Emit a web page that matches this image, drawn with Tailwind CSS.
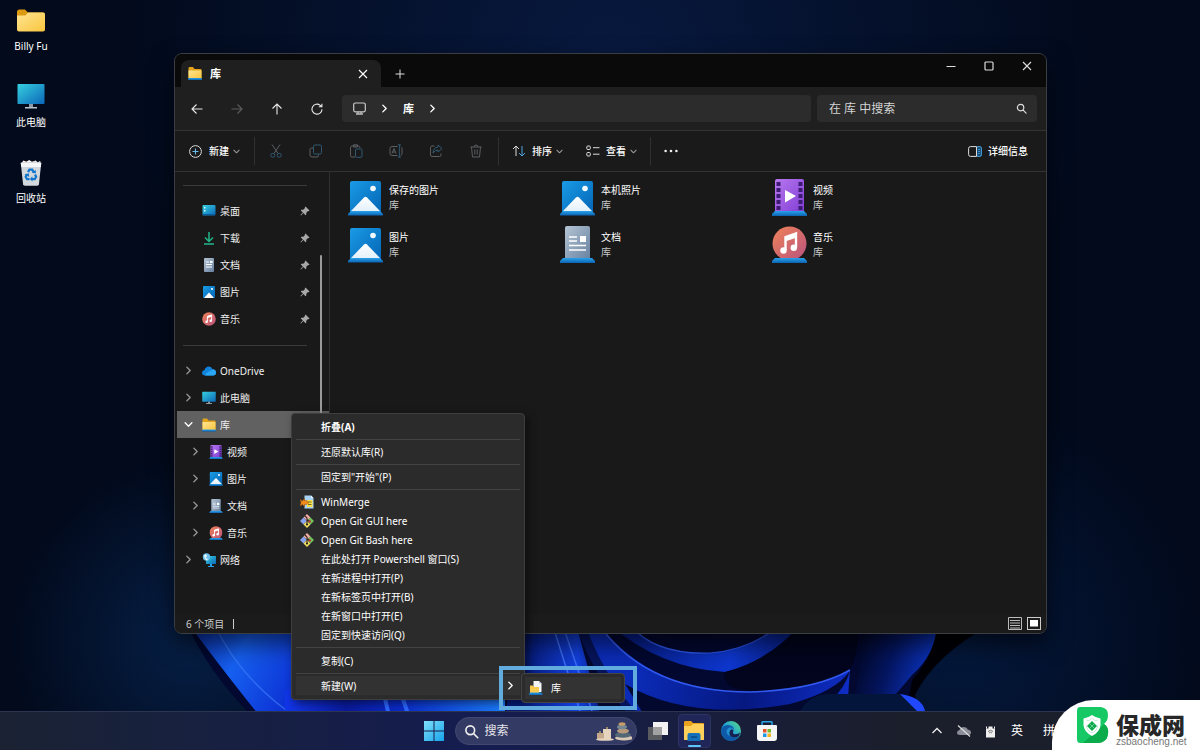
<!DOCTYPE html>
<html lang="zh-CN">
<head>
<meta charset="utf-8">
<title>库 - 文件资源管理器</title>
<script src="https://cdn.jsdelivr.net/npm/@tailwindcss/browser@4"></script>
</head>
<body class="bg-[#020a1c] font-['Noto_Sans','Noto_Sans_CJK_SC',sans-serif] text-[10px] leading-4 text-white">

<!-- Shared icons -->
<svg class="absolute size-0" aria-hidden="true">
  <defs>
    <linearGradient id="gFolder" x1="0" y1="0" x2="1" y2="1"><stop offset="0" stop-color="#ffe594"/><stop offset="1" stop-color="#f9c53c"/></linearGradient>
    <linearGradient id="gScreen" x1="0" y1="0" x2="1" y2="1"><stop offset="0" stop-color="#36d0e0"/><stop offset="1" stop-color="#0b66b8"/></linearGradient>
    <linearGradient id="gPic" x1="0" y1="0" x2="1" y2="1"><stop offset="0" stop-color="#1a9be6"/><stop offset="1" stop-color="#0364b4"/></linearGradient>
    <linearGradient id="gDoc" x1="0" y1="0" x2="1" y2="1"><stop offset="0" stop-color="#b4c4d3"/><stop offset="1" stop-color="#6680a0"/></linearGradient>
    <linearGradient id="gMusic" x1="0" y1="0" x2="1" y2="1"><stop offset="0" stop-color="#f08358"/><stop offset="1" stop-color="#b8527f"/></linearGradient>
    <linearGradient id="gVideo" x1="0" y1="0" x2="1" y2="1"><stop offset="0" stop-color="#b877ee"/><stop offset="1" stop-color="#7f3dd4"/></linearGradient>
    <linearGradient id="gStand" x1="0" y1="0" x2="0" y2="1"><stop offset="0" stop-color="#2aa2ec"/><stop offset="1" stop-color="#0b62b0"/></linearGradient>
    <linearGradient id="gPeak" x1="0" y1="0" x2="0" y2="1"><stop offset="0" stop-color="#fff"/><stop offset="1" stop-color="#e2f1fa"/></linearGradient>
    <linearGradient id="gEdge" x1="0" y1="1" x2="1" y2="0"><stop offset="0" stop-color="#0c59a4"/><stop offset=".5" stop-color="#1fa5d8"/><stop offset="1" stop-color="#5fdc77"/></linearGradient>
    <linearGradient id="gWin" x1="0" y1="0" x2="1" y2="1"><stop offset="0" stop-color="#7fe0fb"/><stop offset="1" stop-color="#16a3ea"/></linearGradient>

    <symbol id="folder" viewBox="0 0 28 22"><path d="M0 2.500Q0 0 2.500 0H8L11 3H26Q28 3 28 5V9H0Z" fill="#dc9a12"/><path d="M0 6H8.500L11 3H26Q28 3 28 5V20Q28 22 26 22H2Q0 22 0 20Z" fill="url(#gFolder)"/></symbol>
    <symbol id="libfolder" viewBox="0 0 28 26"><path d="M1 2.500Q1 0 3 0H10L13 4H25Q27 4 27 6V22H1Z" fill="#e3a41c"/><path d="M1 7H27V23H1Z" fill="url(#gFolder)"/><path d="M2 22H26L28 24V26H0V24Z" fill="url(#gStand)"/></symbol>
    <symbol id="pc" viewBox="0 0 28 25"><rect x=".5" width="27" height="20" rx=".8" fill="url(#gScreen)"/><path d="M12 20h4v3h-4z" fill="#8d9aa5"/><path d="M8 23h12v1.500H8z" fill="#b8c2ca"/></symbol>
    <symbol id="pic" viewBox="0 0 35 35"><rect x="2" y="0" width="31" height="33" rx="2" fill="url(#gPic)"/><path d="M3 30 16 16.500Q17.500 15 19 16.500L32 30Z" fill="url(#gPeak)"/><circle cx="25" cy="7.500" r="2.800" fill="#f2faff"/><path d="M3 30H32L35 33V34.500H0V33Z" fill="url(#gStand)"/></symbol>
    <symbol id="picflat" viewBox="0 0 14 14"><rect x="1" y="1" width="12" height="12" rx="1" fill="url(#gPic)"/><path d="M2 13 7 7.500 12 13Z" fill="#fff"/><circle cx="10" cy="4" r="1.100" fill="#fff"/></symbol>
    <symbol id="doc" viewBox="0 0 35 37"><rect x="5" width="25" height="35" rx="2" fill="url(#gDoc)"/><path d="M9 11h8M9 15h8M9 19.500h17M9 24h17" stroke="#fff" stroke-width="1.700"/><rect x="20" y="10" width="6" height="6" fill="#fff"/><path d="M3 32H32L35 35V37H0V35Z" fill="url(#gStand)"/></symbol>
    <symbol id="docflat" viewBox="0 0 14 14"><rect x="2" width="10" height="14" rx="1" fill="url(#gDoc)"/><path d="M4 4h3M4 6.500h6M4 9h6" stroke="#fff"/><path d="M8 3h2.500v2H8z" fill="#fff"/></symbol>
    <symbol id="disc" viewBox="0 0 35 35"><circle cx="17.500" cy="17.500" r="17" fill="url(#gMusic)"/><path d="M13.500 24V11L24 7.500V21.500" fill="none" stroke="#fff" stroke-width="2.400"/><path d="M13 10.500 25 7v4.500l-12 4z" fill="#fff"/><circle cx="11.500" cy="24.500" r="3.200" fill="#fff"/><circle cx="21.800" cy="21.800" r="3.200" fill="#fff"/></symbol>
    <symbol id="music" viewBox="0 0 35 37"><use href="#disc" width="35" height="35"/><path d="M3 32H32L35 35V37H0V35Z" fill="url(#gStand)"/></symbol>
    <symbol id="video" viewBox="0 0 35 37"><rect x="3" width="29" height="35" rx="2" fill="url(#gVideo)"/><path d="M4.500 3h4v4h-4zm0 6h4v4h-4zm0 6h4v4h-4zm0 6h4v4h-4zm0 6h4v4h-4zM26.500 3h4v4h-4zm0 6h4v4h-4zm0 6h4v4h-4zm0 6h4v4h-4zm0 6h4v4h-4z" fill="#3d1b73"/><path d="M13 11v12.500L24 17Z" fill="#fff"/><path d="M3 32H32L35 35V37H0V35Z" fill="url(#gStand)"/></symbol>
    <symbol id="pin" viewBox="0 0 10 10"><path d="M5.500.500 9.500 4.500 8.700 5.200 8 5 6.300 6.700 6.200 8.700 5.500 9.200 3.400 7.100.900 9.600.400 9.100 2.900 6.600.800 4.500 1.300 3.800 3.300 3.700 5 2 4.800 1.300Z" fill="#a8a8a8"/></symbol>
    <symbol id="right" viewBox="0 0 8 8"><path d="M2.500 1 5.500 4 2.500 7" fill="none" stroke="currentColor" stroke-width="1.200" stroke-linecap="round" stroke-linejoin="round"/></symbol>
    <symbol id="down" viewBox="0 0 8 8"><path d="M1 2.500 4 5.500 7 2.500" fill="none" stroke="currentColor" stroke-width="1.200" stroke-linecap="round" stroke-linejoin="round"/></symbol>
    <symbol id="glass" viewBox="0 0 12 12"><path d="M7.500 7.500 11 11M5 1.500a3.500 3.500 0 1 1 0 7a3.500 3.500 0 0 1 0-7Z" fill="none" stroke="currentColor" stroke-width="1.300" stroke-linecap="round"/></symbol>
    <symbol id="git" viewBox="0 0 14 14"><path d="M7 0 10.500 3.500 7 7 3.500 3.500Z" fill="#f0b0a6"/><path d="M3.500 3.500 7 7 3.500 10.500 0 7Z" fill="#86a4f0"/><path d="M7 7 10.500 10.500 7 14 3.500 10.500Z" fill="#efdf5e"/><path d="M10.500 3.500 14 7 10.500 10.500 7 7Z" fill="#6fc45c"/><path d="M5 2 7 4v6.500M7 5.500 9.500 7.500" stroke="#33231f" stroke-width="1.100" fill="none"/><circle cx="7" cy="10.500" r="1.100" fill="#33231f"/><circle cx="9.700" cy="7.500" r="1.200" fill="#c03030"/></symbol>
  </defs>
</svg>

<div class="relative h-screen overflow-hidden">

  <!-- Wallpaper -->
  <svg class="absolute inset-0 size-full" viewBox="0 0 1200 750" preserveAspectRatio="none" aria-hidden="true">
    <defs>
      <radialGradient id="wTop" cx="610" cy="60" r="480" gradientUnits="userSpaceOnUse"><stop offset="0" stop-color="#08193f"/><stop offset="1" stop-color="#020a1c"/></radialGradient>
      <radialGradient id="wLow" cx="960" cy="640" r="240" gradientUnits="userSpaceOnUse"><stop offset="0" stop-color="#04183c"/><stop offset="1" stop-color="#04183c" stop-opacity="0"/></radialGradient>
      <radialGradient id="wLeft" cx="190" cy="640" r="180" gradientUnits="userSpaceOnUse"><stop offset="0" stop-color="#061f46"/><stop offset="1" stop-color="#061f46" stop-opacity="0"/></radialGradient>
      <linearGradient id="p1" x1="190" y1="640" x2="300" y2="700" gradientUnits="userSpaceOnUse"><stop offset="0" stop-color="#0b2fa8"/><stop offset=".4" stop-color="#1660f0"/><stop offset="1" stop-color="#0b2bd0"/></linearGradient>
      <linearGradient id="p2" x1="280" y1="0" x2="500" y2="0" gradientUnits="userSpaceOnUse"><stop offset="0" stop-color="#1238f0"/><stop offset=".3" stop-color="#0a1a9c"/><stop offset=".55" stop-color="#0a2bc8"/><stop offset="1" stop-color="#1a78f8"/></linearGradient>
      <linearGradient id="p3" x1="525" y1="0" x2="600" y2="0" gradientUnits="userSpaceOnUse"><stop offset="0" stop-color="#061a78"/><stop offset=".7" stop-color="#1240e0"/><stop offset="1" stop-color="#0a1f88"/></linearGradient>
      <linearGradient id="p4" x1="640" y1="650" x2="860" y2="711" gradientUnits="userSpaceOnUse"><stop offset="0" stop-color="#0b2cb8"/><stop offset=".5" stop-color="#061880"/><stop offset="1" stop-color="#1030d0"/></linearGradient>
      <linearGradient id="p5" x1="850" y1="640" x2="935" y2="665" gradientUnits="userSpaceOnUse"><stop offset="0" stop-color="#01041a"/><stop offset=".5" stop-color="#041560"/><stop offset="1" stop-color="#0c36c8"/></linearGradient>
      <linearGradient id="p6" x1="630" y1="630" x2="800" y2="660" gradientUnits="userSpaceOnUse"><stop offset="0" stop-color="#071d88"/><stop offset=".6" stop-color="#0e37d0"/><stop offset="1" stop-color="#061a78"/></linearGradient>
    </defs>
    <rect width="1200" height="750" fill="url(#wTop)"/>
    <rect width="1200" height="750" fill="url(#wLow)"/>
    <rect width="1200" height="750" fill="url(#wLeft)"/>
    <path d="M880 625H990Q935 655 915 695L925 750H860Z" fill="#000006"/>
    <path d="M185 620Q215 690 290 750H900L912 680Q935 655 938 620Z" fill="#020830"/>
    <path d="M186 620Q222 670 275 735H330V620Z" fill="url(#p1)"/>
    <path d="M215 625Q240 680 300 720" stroke="#4a8cff" stroke-opacity=".5" stroke-width="1.500" fill="none"/>
    <rect x="285" y="690" width="220" height="60" fill="url(#p2)"/>
    <path d="M383 690 390 720M400 690 410 720" stroke="#2d66ff" stroke-width="4"/>
    <path d="M520 620H575L610 750H500Z" fill="url(#p3)"/>
    <path d="M551 620 580 711M561 620 592 711" stroke="#3a6cf5" stroke-width="1.500" fill="none"/>
    <path d="M584 625Q612 690 700 725H640Q600 690 575 625Z" fill="#06145c"/>
    <path d="M600 625Q650 692 750 692Q815 690 850 670L846 725H650Q610 690 585 625Z" fill="url(#p4)"/>
    <path d="M625 684Q690 722 790 704Q835 692 850 671Q840 705 790 725H650Z" fill="#03092e"/>
    <path d="M630 625Q655 655 710 653Q750 650 780 625L815 625Q790 655 725 672Q660 668 610 625Z" fill="url(#p6)"/>
    <path d="M650 625Q672 642 710 638L722 625Z" fill="#020730"/>
    <path d="M630 625Q655 655 710 653Q750 650 780 625" stroke="#2b55e8" stroke-width="1.200" fill="none"/>
    <path d="M800 625Q770 660 725 672Q720 688 750 691Q815 690 850 670Q860 650 858 625Z" fill="#02051d"/>
    <path d="M858 625Q866 660 850 711H880Q900 690 912 675Q935 655 937 625Z" fill="url(#p5)"/>
    <path d="M602 629Q650 692 750 692Q815 690 850 670" stroke="#3159f0" stroke-width="1.500" fill="none"/>
    <path d="M800 711Q810 694 830 694H900Q922 698 925 711V750H800Z" fill="#04153c"/>
    <path d="M900 694Q922 697 925 711V722L917 711Z" fill="#1f48ff"/>
  </svg>

  <!-- Desktop icons -->
  <nav class="absolute left-0 top-2 flex w-[62px] flex-col gap-3 text-center" aria-label="桌面">
    <button class="flex h-16 flex-col items-center gap-[2px]"><svg class="h-7 w-7 pb-[3px]"><use href="#folder"/></svg><span>Billy Fu</span></button>
    <button class="flex h-16 flex-col items-center gap-[2px]"><svg class="h-7 w-7 pb-[3px]"><use href="#pc"/></svg><span>此电脑</span></button>
    <button class="flex h-16 flex-col items-center gap-[2px]">
      <svg class="h-7 w-6" viewBox="0 0 24 30"><path d="M1 3h22l-2.500 23q-.200 1.500-2 1.500h-13q-1.800 0-2-1.500z" fill="#d3d8dd"/><path d="M1 3h22l-.500 4.500h-21z" fill="#f5f7f8"/><path d="M2 3 4 .500 7 2 10 0l3 2 4-1.500L19 2.500 22 1v2z" fill="#fff"/><path d="m6 1 2 1h-3zM15 1l2 1h-3z" fill="#e99a6a"/><path d="M8.800 13 10.300 10.300H13.300L14.800 13M16.300 15.500 17.500 18 16 20.500H13M10.500 20.500H7.800L6.300 18 7.800 15.300" fill="none" stroke="#1477cd" stroke-width="2.400"/><path d="m13 13.800 4.300.500L17 10.500zM13.500 17.500v5.500L10.800 20.300zM5 15.500l4.500-1.300.800 4z" fill="#1477cd"/></svg>
      <span>回收站</span></button>
  </nav>

  <!-- Explorer window -->
  <main class="absolute bottom-[116px] left-[174px] right-[153px] top-[53px] flex flex-col overflow-hidden rounded-lg border border-[#3a3d42] bg-[#191919] shadow-[0_10px_24px_rgba(0,0,0,0.6)]">
    <header class="flex h-[33px] shrink-0 items-end bg-[#0a0a0a] pl-[6px]">
      <div class="flex h-[27px] w-[200px] items-center rounded-t-lg bg-[#1f1f1f] pl-[7px] pr-3">
        <svg class="h-[13px] w-[14px]"><use href="#libfolder"/></svg>
        <h1 class="ml-2 flex-1 text-[11px] font-bold">库</h1>
        <button aria-label="关闭标签页"><svg class="size-3" viewBox="0 0 12 12"><path d="m2 2 8 8M10 2l-8 8" stroke="#fff" stroke-width="1.100"/></svg></button>
      </div>
      <button class="flex h-[27px] w-[38px] items-center justify-center" aria-label="新建标签页"><svg class="size-3" viewBox="0 0 12 12"><path d="M6 1.500v9M1.500 6h9" stroke="#ddd"/></svg></button>
      <div class="ml-auto flex self-start">
        <button class="flex h-6 w-[38px] items-center justify-center" aria-label="最小化"><svg class="size-3" viewBox="0 0 12 12"><path d="M1.500 6.500h9" stroke="#ddd"/></svg></button>
        <button class="flex h-6 w-[38px] items-center justify-center" aria-label="最大化"><svg class="size-3" viewBox="0 0 12 12"><rect x="2" y="2" width="8" height="8" rx="1" fill="none" stroke="#ddd" stroke-width="1.200"/></svg></button>
        <button class="flex h-6 w-[38px] items-center justify-center" aria-label="关闭"><svg class="size-3" viewBox="0 0 12 12"><path d="m2 2 8 8M10 2l-8 8" stroke="#ddd" stroke-width="1.100"/></svg></button>
      </div>
    </header>

    <div class="flex h-11 shrink-0 items-center border-b border-[#333] bg-[#1f1f1f] pl-[2px] pr-[9px]">
      <button class="flex w-10 justify-center" aria-label="后退"><svg class="size-3" viewBox="0 0 12 12"><path d="M11.500 6H1M5.500 1.500 1 6l4.500 4.500" fill="none" stroke="#e8e8e8" stroke-width="1.100"/></svg></button>
      <button class="flex w-10 justify-center" aria-label="前进"><svg class="size-3" viewBox="0 0 12 12"><path d="M.500 6H11M6.500 1.500 11 6l-4.500 4.500" fill="none" stroke="#5c5c5c" stroke-width="1.100"/></svg></button>
      <button class="flex w-10 justify-center" aria-label="向上"><svg class="size-3" viewBox="0 0 12 12"><path d="M6 11.500V1M1.500 5.500 6 1l4.500 4.500" fill="none" stroke="#e8e8e8" stroke-width="1.100"/></svg></button>
      <button class="flex w-10 justify-center" aria-label="刷新"><svg class="size-3" viewBox="0 0 12 12"><path d="M11 6.200A5 5 0 1 1 9.200 2.300L10.800 3.600M10.900.700V3.800H7.800" fill="none" stroke="#e8e8e8" stroke-width="1.100"/></svg></button>
      <div class="ml-[5px] flex h-[27px] flex-1 items-center rounded bg-[#2c2c2c] pl-[11px]">
        <svg class="size-[13px]" viewBox="0 0 13 13"><rect x=".7" y="1" width="11.600" height="8.800" rx="1.500" fill="none" stroke="#ccc" stroke-width="1.200"/><path d="M3 12h7M5 10v2M8 10v2" stroke="#bbb" stroke-width="1.300"/></svg>
        <svg class="ml-[14px] size-[9px]"><use href="#right"/></svg>
        <a href="#" class="ml-[14px] text-[11px] font-bold">库</a>
        <svg class="ml-[14px] size-[9px]"><use href="#right"/></svg>
      </div>
      <label class="ml-[6px] flex h-[27px] w-[220px] items-center rounded bg-[#2c2c2c] pl-3 pr-[10px]">
        <input type="text" aria-label="在 库 中搜索" placeholder="在 库 中搜索" class="min-w-0 flex-1 bg-transparent text-xs text-white outline-none placeholder:text-[#d4d4d4]">
        <svg class="size-[11px] text-[#ddd]"><use href="#glass"/></svg>
      </label>
    </div>

    <div class="flex h-[41px] shrink-0 items-center border-b border-[#333] bg-[#1a1a1a] font-medium" role="toolbar" aria-label="命令">
      <button class="flex w-[79px] items-center pl-[14px]"><svg class="size-[13px]" viewBox="0 0 13 13"><circle cx="6.500" cy="6.500" r="5.900" fill="none" stroke="#ddd"/><path d="M6.500 3.500v6M3.500 6.500h6" stroke="#6cb8e8" stroke-width="1.100"/></svg><span class="ml-[7px]">新建</span><svg class="ml-1 size-[7px] text-[#999]"><use href="#down"/></svg></button>
      <div class="mr-px h-7 w-px bg-[#303030]"></div>
      <button class="flex w-10 justify-center" aria-label="剪切"><svg class="size-[14px]" viewBox="0 0 14 14" fill="none" stroke="#5a5f63"><path d="M3 .500 9 9.500M11 .500 5 9.500"/><circle cx="3.800" cy="11.300" r="2" stroke="#2f5872"/><circle cx="10.200" cy="11.300" r="2" stroke="#2f5872"/></svg></button>
      <button class="flex w-10 justify-center" aria-label="复制"><svg class="size-[14px]" viewBox="0 0 14 14" fill="none"><rect x="4.500" y="1" width="8" height="9" rx="1.500" stroke="#2f5872"/><path d="M4 4H2.500Q1 4 1 5.500V11Q1 13 3 13H8Q9.500 13 9.500 11.500V10.500" stroke="#5a5f63"/></svg></button>
      <button class="flex w-10 justify-center" aria-label="粘贴"><svg class="size-[14px]" viewBox="0 0 14 14" fill="none"><path d="M6 13H3Q1.500 13 1.500 11.500V3.500Q1.500 2 3 2H9.500Q11 2 11 4M4.500.800H8.500V3H4.500Z" stroke="#5a5f63"/><rect x="6.500" y="5" width="6.500" height="8.300" rx="1" stroke="#2f5872"/></svg></button>
      <button class="flex w-10 justify-center" aria-label="重命名"><svg class="size-[14px]" viewBox="0 0 14 14" fill="none"><path d="M8.500 2.500H3Q1 2.500 1 4.500V9.500Q1 11.500 3 11.500H8.500M12 2.800Q13 3.500 13 4.500V9.500Q13 11 11.500 11.500M3 9.500 5 4.500 7 9.500M3.700 8h2.600" stroke="#5a5f63"/><path d="M8.800.800H12M8.800 13.200H12M10.400.800V13.200" stroke="#2f5872"/></svg></button>
      <button class="flex w-10 justify-center" aria-label="共享"><svg class="size-[14px]" viewBox="0 0 14 14" fill="none"><path d="M5.500 2H3Q1.500 2 1.500 3.500V11Q1.500 12.500 3 12.500H10.500Q12 12.500 12 11V9.500" stroke="#5a5f63"/><path d="M9 1 13 4.500 9 8V6Q6 6 4 9Q4.500 3.500 9 3Z" stroke="#2f5872"/></svg></button>
      <button class="flex w-10 justify-center" aria-label="删除"><svg class="size-[14px]" viewBox="0 0 14 14" fill="none" stroke="#5a5f63"><path d="M1.500 3H12.500M5 3Q5 1 7 1T9 3M2.500 3 3.500 13H10.500L11.500 3M5.800 5.500V10.500M8.200 5.500V10.500"/></svg></button>
      <div class="ml-[2px] h-7 w-px bg-[#303030]"></div>
      <button class="flex w-[74px] items-center pl-[13px]"><svg class="h-3 w-[14px]" viewBox="0 0 14 12" fill="none"><path d="M4 11V1M1 4 4 1 7 4" stroke="#ddd"/><path d="M10 1V11M7 8 10 11 13 8" stroke="#4ba3e0"/></svg><span class="ml-[6px]">排序</span><svg class="ml-1 size-[7px] text-[#999]"><use href="#down"/></svg></button>
      <button class="flex w-[77px] items-center pl-[13px]"><svg class="h-3 w-[14px]" viewBox="0 0 14 12" fill="none" stroke="#ddd"><rect x=".800" y="1" width="3.500" height="3.500" rx="1"/><rect x=".800" y="7.500" width="3.500" height="3.500" rx="1"/><path d="M7 2.700h6.500M7 9.200h6.500"/></svg><span class="ml-[6px]">查看</span><svg class="ml-1 size-[7px] text-[#999]"><use href="#down"/></svg></button>
      <div class="h-7 w-px bg-[#303030]"></div>
      <button class="flex w-10 justify-center" aria-label="更多"><svg class="h-1 w-[14px]" viewBox="0 0 14 4" fill="#eee"><circle cx="1.600" cy="2" r="1.300"/><circle cx="7" cy="2" r="1.300"/><circle cx="12.400" cy="2" r="1.300"/></svg></button>
      <button class="ml-auto mr-[18px] flex items-center gap-[6px]"><svg class="h-[11px] w-[14px]" viewBox="0 0 14 11" fill="none"><rect x="8.500" y=".600" width="4.900" height="9.800" rx="1.500" fill="#164a70" stroke="#4ba3e0"/><path d="M8.500.600H2.500Q.600.600.600 2.500V8.500Q.600 10.400 2.500 10.400H8.500Z" stroke="#ddd"/><path d="M10 3.500h2M10 5.500h2M10 7.500h2" stroke="#4ba3e0" stroke-width=".800"/></svg>详细信息</button>
    </div>

    <div class="flex min-h-0 flex-1">
      <aside class="relative flex w-[155px] shrink-0 flex-col border-r border-[#303030] pl-[2px] text-[#eee]">
        <hr class="mb-[11px] ml-[6px] mt-[13px] w-[124px] border-[#3a3a3a]">
        <a href="#" class="flex h-[27px] items-center pl-[25px]"><svg class="h-[11px] w-[14px]" viewBox="0 0 14 11"><rect x=".500" width="13" height="10.500" rx="1" fill="url(#gScreen)"/><path d="M2 2h1.500v1.500H2zm0 3h1.500v1.500H2z" fill="#d8f8ff"/><path d="M1 9.500h12" stroke="#0a5a9c"/></svg><span class="ml-1 w-20">桌面</span><svg class="size-[10px]"><use href="#pin"/></svg></a>
        <a href="#" class="flex h-[27px] items-center pl-[25px]"><svg class="size-[14px]" viewBox="0 0 14 14" fill="none" stroke="#23b58a" stroke-width="1.500"><path d="M7 1V10M3 6.500 7 10.500 11 6.500M2 13H12"/></svg><span class="ml-1 w-20">下载</span><svg class="size-[10px]"><use href="#pin"/></svg></a>
        <a href="#" class="flex h-[27px] items-center pl-[25px]"><svg class="size-[14px]"><use href="#docflat"/></svg><span class="ml-1 w-20">文档</span><svg class="size-[10px]"><use href="#pin"/></svg></a>
        <a href="#" class="flex h-[27px] items-center pl-[25px]"><svg class="size-[14px]"><use href="#picflat"/></svg><span class="ml-1 w-20">图片</span><svg class="size-[10px]"><use href="#pin"/></svg></a>
        <a href="#" class="flex h-[27px] items-center pl-[25px]"><svg class="size-[14px]"><use href="#disc"/></svg><span class="ml-1 w-20">音乐</span><svg class="size-[10px]"><use href="#pin"/></svg></a>
        <hr class="mb-[11px] ml-[6px] mt-[13px] w-[124px] border-[#3a3a3a]">
        <a href="#" class="flex h-[27px] items-center pl-[7px]"><svg class="mr-[9px] size-[9px] text-[#999]"><use href="#right"/></svg><svg class="h-[10px] w-[14px]" viewBox="0 0 14 10"><path d="M3.500 9.500Q0 9.500 0 6.800Q0 4.500 2.500 4Q3.500.500 7 .500Q9.500.500 10.500 3.200Q14 3.500 14 6.500Q14 9.500 11 9.500Z" fill="#1283dc"/><path d="M3 9.500Q5 6 9 4.500Q11 3 12 3.600Q14 4.200 14 6.500Q14 9.500 11 9.500Z" fill="#2ba6f5"/></svg><span class="ml-1">OneDrive</span></a>
        <a href="#" class="flex h-[27px] items-center pl-[7px]"><svg class="mr-[9px] size-[9px] text-[#999]"><use href="#right"/></svg><svg class="size-[14px]"><use href="#pc"/></svg><span class="ml-1">此电脑</span></a>
        <a href="#" class="flex h-[27px] items-center bg-[#616161] pl-[7px]" aria-current="true"><svg class="mr-[9px] size-[9px] text-white"><use href="#down"/></svg><svg class="size-[14px]"><use href="#libfolder"/></svg><span class="ml-1">库</span></a>
        <a href="#" class="flex h-[27px] items-center pl-[14px]"><svg class="mr-[9px] size-[9px] text-[#999]"><use href="#right"/></svg><svg class="size-[14px]"><use href="#video"/></svg><span class="ml-1">视频</span></a>
        <a href="#" class="flex h-[27px] items-center pl-[14px]"><svg class="mr-[9px] size-[9px] text-[#999]"><use href="#right"/></svg><svg class="size-[14px]"><use href="#pic"/></svg><span class="ml-1">图片</span></a>
        <a href="#" class="flex h-[27px] items-center pl-[14px]"><svg class="mr-[9px] size-[9px] text-[#999]"><use href="#right"/></svg><svg class="size-[14px]"><use href="#doc"/></svg><span class="ml-1">文档</span></a>
        <a href="#" class="flex h-[27px] items-center pl-[14px]"><svg class="mr-[9px] size-[9px] text-[#999]"><use href="#right"/></svg><svg class="size-[14px]"><use href="#music"/></svg><span class="ml-1">音乐</span></a>
        <a href="#" class="flex h-[27px] items-center pl-[7px]"><svg class="mr-[9px] size-[9px] text-[#999]"><use href="#right"/></svg><svg class="size-[14px]" viewBox="0 0 14 14"><rect x="4" y="3" width="10" height="8" rx=".500" fill="url(#gScreen)"/><path d="M8 11h2v2h2v1H6v-1h2z" fill="#2aa0e8"/><circle cx="4.500" cy="4" r="3.700" fill="#6fc0ea"/><path d="M2 2.500 4 1l1 2-1.500 2L6 6 5 7.500 3 6Z" fill="#e9f8ff"/></svg><span class="ml-1">网络</span></a>
        <div class="absolute right-[7px] top-[83px] h-[330px] w-[2px] rounded bg-[#9a9a9a]"></div>
      </aside>

      <section class="grid flex-1 auto-rows-[47px] grid-cols-[repeat(auto-fill,212px)] content-start pl-[18px] pt-[2px] leading-[15px]" aria-label="库">
        <button class="flex items-center gap-[6px] text-left"><svg class="h-[37px] w-[35px] pt-[2px]"><use href="#pic"/></svg><span>保存的图片<br><span class="text-[#c8c8c8]">库</span></span></button>
        <button class="flex items-center gap-[6px] text-left"><svg class="h-[37px] w-[35px] pt-[2px]"><use href="#pic"/></svg><span>本机照片<br><span class="text-[#c8c8c8]">库</span></span></button>
        <button class="flex items-center gap-[6px] text-left"><svg class="h-[37px] w-[35px]"><use href="#video"/></svg><span>视频<br><span class="text-[#c8c8c8]">库</span></span></button>
        <button class="flex items-center gap-[6px] text-left"><svg class="h-[37px] w-[35px] pt-[2px]"><use href="#pic"/></svg><span>图片<br><span class="text-[#c8c8c8]">库</span></span></button>
        <button class="flex items-center gap-[6px] text-left"><svg class="h-[37px] w-[35px]"><use href="#doc"/></svg><span>文档<br><span class="text-[#c8c8c8]">库</span></span></button>
        <button class="flex items-center gap-[6px] text-left"><svg class="h-[37px] w-[35px]"><use href="#music"/></svg><span>音乐<br><span class="text-[#c8c8c8]">库</span></span></button>
      </section>
    </div>

    <footer class="flex h-[19px] shrink-0 items-center bg-[#1b1b1b] pl-[11px] pr-[5px] text-[#ccc]">
      <span>6 个项目</span><span class="ml-[9px] h-[10px] w-px bg-[#ccc]"></span>
      <button class="ml-auto" aria-label="详细信息视图"><svg class="h-[13px] w-[14px]" viewBox="0 0 14 13"><path d="M.500.500h13v12H.500zM2 3.500h10M2 6h10M2 8.500h10M2 11h10" fill="none" stroke="#bbb"/></svg></button>
      <button class="ml-[5px]" aria-label="大图标视图"><svg class="h-[13px] w-[14px]" viewBox="0 0 14 13"><rect x=".500" y=".500" width="13" height="12" fill="none" stroke="#ccc"/><rect x="3" y="3" width="8" height="6.500" fill="#fff"/></svg></button>
    </footer>
  </main>

  <!-- Context menu -->
  <div role="menu" class="absolute left-[291px] top-[413px] flex w-[234px] flex-col rounded-sm border border-[#3e3e3e] bg-[#2b2b2b] px-1 pb-1 pt-[3px] shadow-[3px_3px_8px_rgba(0,0,0,0.5)]">
    <button role="menuitem" class="h-[19px] pl-[25px] text-left font-bold">折叠(A)</button>
    <hr class="mb-[2px] mt-[3px] border-[#424242]">
    <button role="menuitem" class="h-[19px] pl-[25px] text-left">还原默认库(R)</button>
    <hr class="mb-[2px] mt-[3px] border-[#424242]">
    <button role="menuitem" class="h-[19px] pl-[25px] text-left">固定到"开始"(P)</button>
    <hr class="mb-[2px] mt-[3px] border-[#424242]">
    <button role="menuitem" class="flex h-[19px] items-center gap-[7px] pl-1"><svg class="size-[14px]" viewBox="0 0 14 14"><path d="M4.500.500H11L13.500 3V13.500H4.500Z" fill="#a8d3f5"/><path d="M11 .500V3h2.500z" fill="#e8f5ff"/><path d="M7 5h5.500v7H7z" fill="#f5e04a"/><path d="M8 7h3.500M8 9.500h3.500" stroke="#7a6a20"/><path d="M0 4.500 2.500 6 4.500 3.500V5.500H6.500L9 7.500 6.500 9.500H4.500V11.500L2.500 9.500 0 11 1 7.500Z" fill="#f08c1c" stroke="#98500c" stroke-width=".500"/></svg>WinMerge</button>
    <button role="menuitem" class="flex h-[19px] items-center gap-[7px] pl-1"><svg class="size-[14px]"><use href="#git"/></svg>Open Git GUI here</button>
    <button role="menuitem" class="flex h-[19px] items-center gap-[7px] pl-1"><svg class="size-[14px]"><use href="#git"/></svg>Open Git Bash here</button>
    <button role="menuitem" class="h-[19px] pl-[25px] text-left">在此处打开 Powershell 窗口(S)</button>
    <button role="menuitem" class="h-[19px] pl-[25px] text-left">在新进程中打开(P)</button>
    <button role="menuitem" class="h-[19px] pl-[25px] text-left">在新标签页中打开(B)</button>
    <button role="menuitem" class="h-[19px] pl-[25px] text-left">在新窗口中打开(E)</button>
    <button role="menuitem" class="h-[19px] pl-[25px] text-left">固定到快速访问(Q)</button>
    <hr class="my-[3px] border-[#424242]">
    <button role="menuitem" class="h-[19px] pl-[25px] text-left">复制(C)</button>
    <hr class="mb-[2px] mt-[3px] border-[#424242]">
    <button role="menuitem" class="flex h-[19px] items-center justify-between bg-[#323232] pl-[25px] pr-[5px]" aria-haspopup="true">新建(W)<svg class="size-[9px]"><use href="#right"/></svg></button>
  </div>

  <!-- Submenu with its highlight frame -->
  <div class="absolute left-[499px] top-[666px] h-11 w-[138px] border-4 border-[#61abdf] pl-[18px] pr-2 pt-[3px]">
    <div role="menu" class="h-[30px] rounded-sm border border-[#444] bg-[#2b2b2b] p-[3px]">
      <button role="menuitem" class="flex h-[22px] w-full items-center gap-2 bg-[#333] pl-1"><svg class="size-[14px]" viewBox="0 0 14 14"><path d="M4.500 0H10L12.500 2.500V11H4.500Z" fill="#f4f6f8"/><path d="M10 0v2.500h2.500z" fill="#b9c4cc"/><path d="M1 4.500H4L5 6H10V12H1Z" fill="#f8ca4d"/><path d="M1 11.500H12L13.500 13V14H0V13Z" fill="url(#gStand)"/></svg>库</button>
    </div>
  </div>

  <!-- Taskbar -->
  <footer class="absolute inset-x-0 bottom-0 flex h-[39px] items-center justify-center border-t border-[#2d3450] bg-linear-to-r from-[#1a2233] via-[#151c50] via-40% to-[#1b1e2b] to-75%">
    <div class="flex items-center">
      <button aria-label="开始"><svg class="size-5" viewBox="0 0 20 20" fill="url(#gWin)"><path d="M0 0h9.500v9.500H0zM10.500 0H20v9.500h-9.500zM0 10.500h9.500V20H0zM10.500 10.500H20V20h-9.500z"/></svg></button>
      <label class="ml-[11px] flex h-7 w-[182px] items-center rounded-full border border-[#424970] bg-[#333a64] pl-2">
        <svg class="size-[15px] shrink-0 text-[#eee]"><use href="#glass"/></svg>
        <input type="text" aria-label="搜索" placeholder="搜索" class="ml-[6px] min-w-0 flex-1 bg-transparent text-xs outline-none placeholder:text-[#e5e5ea]">
        <svg class="mr-1 h-5 w-9 shrink-0" viewBox="0 0 36 20"><ellipse cx="28" cy="17" rx="9" ry="2.500" fill="#d8c8b4"/><ellipse cx="27" cy="14" rx="8" ry="2.700" fill="#536877"/><ellipse cx="27" cy="10" rx="6" ry="2.500" fill="#b69a7b"/><ellipse cx="26" cy="6" rx="5" ry="2.200" fill="#748794"/><ellipse cx="26" cy="3" rx="3.500" ry="1.800" fill="#c89c68"/><path d="M7 8h8v10H7z" fill="#e6d4bf"/><path d="M1 12h7v7H1z" fill="#c5a98d"/><path d="M11 8V6M4 12v-2" stroke="#ffd36b"/><ellipse cx="9" cy="18.500" rx="9" ry="1.300" fill="#e5d3be"/></svg>
      </label>
      <button class="ml-[11px]" aria-label="任务视图"><svg class="h-[18px] w-5" viewBox="0 0 20 18"><path d="M5 0h15v13H5z" fill="#f3f3f3"/><path d="M0 5h14v13H0z" fill="#666" fill-opacity=".850"/><path d="M5 5h9v8H5z" fill="#a2a2a2"/></svg></button>
      <button class="relative ml-[10px] flex h-[34px] w-[33px] items-center justify-center rounded border border-[#2c3262] bg-[#202758]" aria-label="文件资源管理器"><svg class="h-5 w-[22px]" viewBox="0 0 22 20"><path d="M1 1.500Q1 0 2 0H8L10 2H20Q21 2 21 3V19H1Z" fill="#e8a21c"/><path d="M1 5H8L10 3H21V18Q21 19 20 19H2Q1 19 1 18Z" fill="#fcd05a"/><path d="M4.500 14Q4.500 12 6.500 12H15.500Q17.500 12 17.500 14V20H4.500Z" fill="#1470b8"/><path d="M8 16h6" stroke="#0a4a88" stroke-width="1.500"/></svg><span class="absolute bottom-0 left-[9px] h-[2px] w-[13px] rounded bg-[#5ec4f5]"></span></button>
      <button class="ml-[10px]" aria-label="Edge"><svg class="size-5" viewBox="0 0 20 20"><circle cx="10" cy="10" r="10" fill="url(#gEdge)"/><path d="M0 10Q1 4 7 4Q13 4.500 13 9Q11.500 6.500 9 8Q6.500 11 9.500 15Q12 17.500 17.500 15.800Q14.500 20 10 20Q1 19.500 0 10Z" fill="#0e5aa8"/><path d="M9 8Q6.500 11 9.500 15Q6 14.500 5.500 11Q5.500 7.500 8.500 6.500Q12.500 6 13 9Q11.500 6.500 9 8Z" fill="#2290d0"/><path d="M10 8.500Q12 7.500 12.500 10Q11 12 13 13Q16 14 19 11.500Q18.500 14 17.500 15.500Q12 17.500 9.500 15Q7 11.500 10 8.500Z" fill="#18204f"/></svg></button>
      <button class="ml-4" aria-label="Microsoft Store"><svg class="h-5 w-5" viewBox="0 0 20 20"><path d="M5 5V1.500Q5 .700 6 .700H14Q15 .700 15 1.500V5" fill="none" stroke="#2aa6e8" stroke-width="1.500"/><path d="M0 5Q0 4 1 4H19Q20 4 20 5V17Q20 20 17 20H3Q0 20 0 17Z" fill="#f4f6f8"/><path d="M6 8h3.500v3.500H6z" fill="#e8502a"/><path d="M10.500 8H14v3.500h-3.500z" fill="#76b82a"/><path d="M6 12.500h3.500V16H6z" fill="#1f9ae0"/><path d="M10.500 12.500H14V16h-3.500z" fill="#f5b51e"/></svg></button>
    </div>
    <div class="absolute right-[145px] flex h-full items-center text-xs">
      <button aria-label="显示隐藏的图标"><svg class="size-3" viewBox="0 0 12 12"><path d="M1.500 8 6 3.500 10.500 8" fill="none" stroke="#eee" stroke-width="1.300"/></svg></button>
      <button class="ml-[13px]" aria-label="OneDrive"><svg class="h-3 w-4" viewBox="0 0 16 12"><path d="M4 10Q1 10 1 7.500Q1 5.500 3.500 5Q4.500 2 8 2Q11 2 11.800 4.500Q15 5 15 7.500Q15 10 12 10Z" fill="#8b8e98"/><path d="M2 .500 14 11.500" stroke="#ddd" stroke-width="1.200"/></svg></button>
      <button class="ml-[13px]" aria-label="电池"><svg class="h-[13px] w-[11px]" viewBox="0 0 11 13"><path d="M1 3.500h9V12.500H1zM3.500 1.500h4v2h-4z" fill="#eee"/><path d="M1.500 1.500v2M9.500 1.500v2" stroke="#eee"/><path d="M3 6.500Q5.500 4 8 6.500M4 8Q5.500 6.500 7 8" fill="none" stroke="#777"/></svg></button>
      <button class="ml-[15px]" aria-label="英文输入">英</button>
      <button class="ml-5" aria-label="拼音">拼</button>
    </div>
  </footer>

  <!-- Site badge -->
  <a href="#" class="absolute bottom-0 right-0 flex h-[50px] w-[148px] items-center rounded-tl-[42px] bg-white pl-[25px]">
    <svg class="h-9 w-8 shrink-0" viewBox="0 0 32 36"><path d="M3 0H24Q31 1 31 8Q31 14 27 17Q32 20 31 27Q30 35 22 36H3Q0 36 0 32V4Q0 0 3 0Z" fill="#17c965"/><path d="M27 17Q32 20 31 27Q30 35 22 36H6L24 20Z" fill="#0cab4c"/><path d="M15 8Q11 11 6.500 11.500V18Q7 25 15 29Q23 25 23.500 18V11.500Q19 11 15 8Z" fill="#fff"/><path d="M15 11.500Q12.500 13.500 9 14V18Q9.500 23 15 26Q20.500 23 21 18V14Q17.500 13.500 15 11.500Z" fill="#10b454"/><path d="M15 11.500Q12.500 13.500 9 14V18Q9.500 23 15 26Q20.500 23 21 18V14Q17.500 13.500 15 11.500Z" fill="#fff"/><path d="m15 14 5 5-5 5-5-5z" fill="#10a84c"/><path d="m12.500 16.500 5 5M17.500 16.500l-5 5" stroke="#7fdca4" stroke-width=".700"/></svg>
    <span class="ml-[7px] flex flex-col self-end pb-[2px] text-[#272727]"><span class="font-['Noto_Sans_CJK_SC',sans-serif] text-[23px] font-black leading-6">保成网</span><span class="font-['Liberation_Sans',sans-serif] text-[10px] leading-3 text-[#777]">zsbaocheng.net</span></span>
  </a>
</div>
</body>
</html>
